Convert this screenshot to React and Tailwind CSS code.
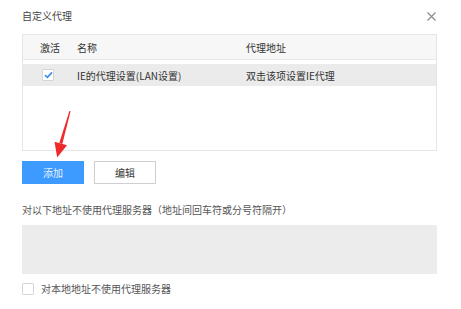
import React, { useState } from 'react';

function CheckBox({ checked, onChange }) {
  return (
    <div
      onClick={onChange}
      className="w-[12px] h-[12px] border border-[#d6d6d6] bg-white flex items-center justify-center rounded-[1px]"
    >
      {checked && (
        <svg width="9" height="8" viewBox="0 0 9 8">
          <path d="M1 4.2 L3.4 6.4 L8 1.4" fill="none" stroke="#3b8fe8" strokeWidth="1.6" />
        </svg>
      )}
    </div>
  );
}

function App() {
  const [ieChecked, setIeChecked] = useState(true);
  const [localBypass, setLocalBypass] = useState(false);

  return (
    <div
      className="relative w-[461px] h-[309px] bg-white pl-[22px] pr-[24px] text-[10px] text-[#333]"
      style={{ fontFamily: '"Noto Sans CJK SC", "Noto Sans", sans-serif' }}
    >
      {/* title bar */}
      <div className="h-[34px] flex items-start justify-between pt-[9px]">
        <div className="leading-[14px] text-[#444]">自定义代理</div>
        <svg width="9" height="9" viewBox="0 0 9 9" className="mt-[3px] mr-[1px]">
          <path d="M0.5 0.5 L8.5 8.5 M8.5 0.5 L0.5 8.5" stroke="#8a8a8a" strokeWidth="1.1" />
        </svg>
      </div>

      {/* proxy table */}
      <div className="h-[117px] border border-[#e6e6e6]">
        <div className="grid grid-cols-[54px_169px_1fr] h-[25px] items-center bg-[#f7f7f7] border-b border-[#e8e8e8]">
          <div className="pl-[17px]">激活</div>
          <div>名称</div>
          <div>代理地址</div>
        </div>
        <div className="h-[4px]" />
        <div className="grid grid-cols-[54px_169px_1fr] h-[22px] items-center bg-[#ebebeb]">
          <div className="pl-[19px]">
            <CheckBox checked={ieChecked} onChange={() => setIeChecked(!ieChecked)} />
          </div>
          <div>IE的代理设置(LAN设置)</div>
          <div>双击该项设置IE代理</div>
        </div>
      </div>

      {/* buttons */}
      <div className="flex gap-[10px] mt-[10px]">
        <button className="w-[62px] h-[23px] bg-[#3d9bff] text-[#e6f1ff]">添加</button>
        <button className="w-[62px] h-[23px] bg-white border border-[#cfcfcf] text-[#333]">编辑</button>
      </div>

      {/* bypass list */}
      <div className="mt-[19px] leading-[14px] text-[#555]">
        对以下地址不使用代理服务器（地址间回车符或分号符隔开）
      </div>
      <div className="mt-[8px] h-[49px] bg-[#ececec]" />

      <div className="mt-[7px] flex items-center gap-[7px]">
        <CheckBox checked={localBypass} onChange={() => setLocalBypass(!localBypass)} />
        <span className="text-[#555]">对本地地址不使用代理服务器</span>
      </div>

      {/* red annotation arrow */}
      <svg className="absolute left-0 top-0 pointer-events-none" width="461" height="309">
        <polygon
          points="69.4,111 70.6,111.3 62.3,143.9 59.3,143.1"
          fill="#ee2a2a"
        />
        <polygon points="54.5,141.7 67,145.3 57.2,157.5" fill="#ee2a2a" />
      </svg>
    </div>
  );
}

export default App;
